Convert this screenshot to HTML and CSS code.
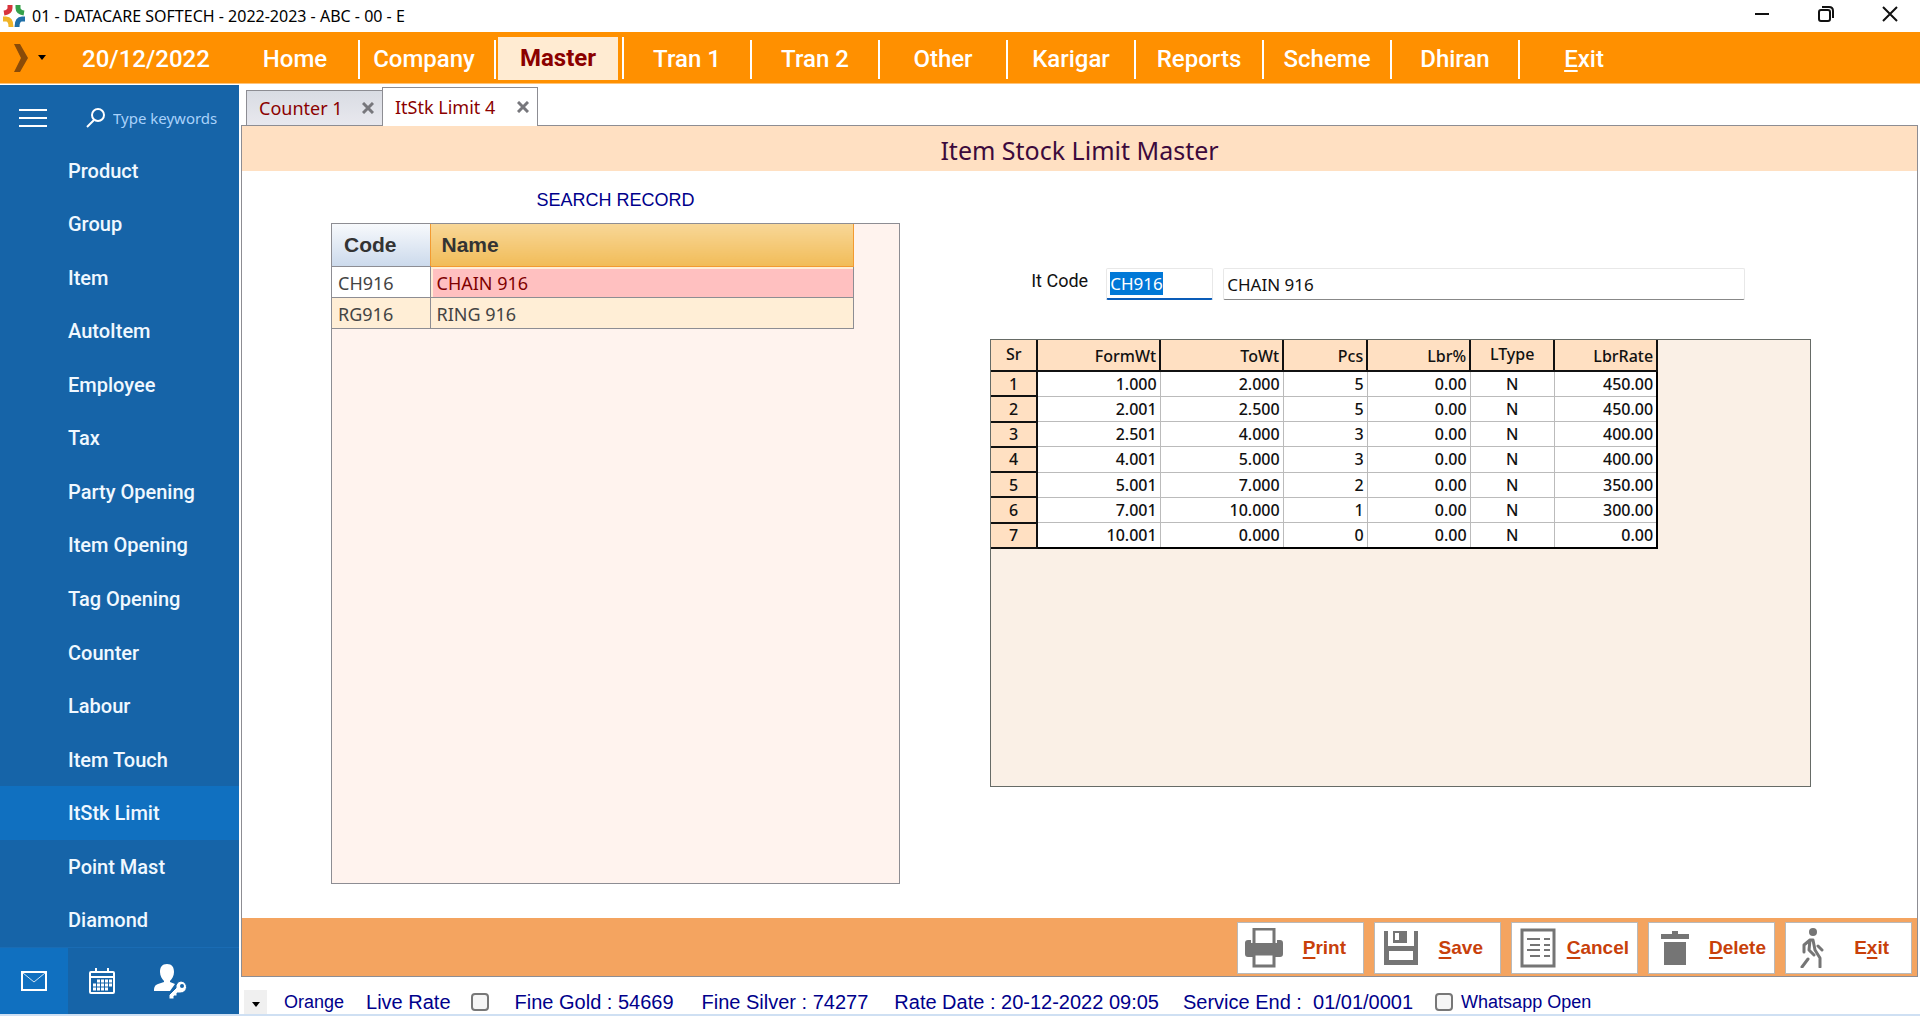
FILE: index.html
```html
<!DOCTYPE html>
<html lang="en">
<head>
    <meta charset="UTF-8">
    <meta name="viewport" content="width=device-width, initial-scale=1.0">
    <title>01 - DATACARE SOFTECH - 2022-2023 - ABC - 00 - E</title>
    <link rel="stylesheet" href="styles.css">
</head>
<body>

    <!-- Window title -->
    <header class="titlebar">
        <svg class="logo" viewBox="0 0 24 24" fill="none" stroke-width="5">
            <path d="M8 1v3q0 4-6 5" stroke="#d8343c"/>
            <path d="M16 1v3q0 4 6 5" stroke="#35a04a"/>
            <path d="M1 15h3q5 0 5 8" stroke="#f0b428"/>
            <path d="M23 15h-3q-5 0-5 8" stroke="#1f6fa8"/>
        </svg>
        <span class="window-title">01 - DATACARE SOFTECH - 2022-2023 - ABC - 00 - E</span>
        <div class="window-buttons">
            <button aria-label="Minimize"><svg viewBox="0 0 16 16"><path d="M1 8h14"/></svg></button>
            <button aria-label="Restore"><svg viewBox="0 0 16 16"><rect x="1" y="4" width="11" height="11" rx="2"/><path d="M4 1h7q4 0 4 4v7"/></svg></button>
            <button aria-label="Close"><svg viewBox="0 0 16 16"><path d="M1 1l14 14M15 1L1 15"/></svg></button>
        </div>
    </header>

    <!-- Main menu -->
    <nav class="menubar">
        <button class="theme-btn" aria-label="Expand">
            <svg width="14" height="28" viewBox="0 0 14 28"><path d="M0 0h6l8 14-8 14H0l7-14z" fill="#8a4b08"/></svg>
            <svg width="8" height="5" viewBox="0 0 8 5"><path d="M0 0h8L4 5z" fill="#000"/></svg>
        </button>
        <span class="menu-date">20/12/2022</span>
        <a class="menu-item" href="#">Home</a>
        <a class="menu-item wide" href="#">Company</a>
        <a class="menu-item active" href="#"><span>Master</span></a>
        <a class="menu-item" href="#">Tran 1</a>
        <a class="menu-item" href="#">Tran 2</a>
        <a class="menu-item" href="#">Other</a>
        <a class="menu-item" href="#">Karigar</a>
        <a class="menu-item" href="#">Reports</a>
        <a class="menu-item" href="#">Scheme</a>
        <a class="menu-item" href="#">Dhiran</a>
        <a class="menu-item" href="#"><span><u>E</u>xit</span></a>
    </nav>

    <div class="main">

        <!-- Sidebar -->
        <aside class="sidebar">
            <div class="side-search">
                <button aria-label="Menu"><svg width="28" height="18" viewBox="0 0 28 18"><path d="M0 1h28M0 9h28M0 17h28" stroke="#fff" stroke-width="2"/></svg></button>
                <label for="keywords"><svg width="20" height="20" viewBox="0 0 20 20" fill="none" stroke="#fff" stroke-width="2"><circle cx="12" cy="7" r="6"/><path d="M8 12l-7 7"/></svg></label>
                <input type="text" id="keywords" placeholder="Type keywords" aria-label="Type keywords">
            </div>
            <div class="side-list">
                <a href="#">Product</a>
                <a href="#">Group</a>
                <a href="#">Item</a>
                <a href="#">AutoItem</a>
                <a href="#">Employee</a>
                <a href="#">Tax</a>
                <a href="#">Party Opening</a>
                <a href="#">Item Opening</a>
                <a href="#">Tag Opening</a>
                <a href="#">Counter</a>
                <a href="#">Labour</a>
                <a href="#">Item Touch</a>
                <a href="#" class="active">ItStk Limit</a>
                <a href="#">Point Mast</a>
                <a href="#">Diamond</a>
            </div>
            <div class="side-bottom">
                <button class="active" aria-label="Mail">
                    <svg width="26" height="20" viewBox="0 0 26 20" fill="none" stroke="#fff"><rect x="1" y="1" width="24" height="18" stroke-width="2"/><path d="M2 2l11 9L24 2" stroke-width="1" opacity=".8"/></svg>
                </button>
                <button aria-label="Calendar">
                    <svg width="26" height="26" viewBox="0 0 26 26" fill="none" stroke="#fff">
                        <rect x="1" y="4" width="24" height="21" rx="1" stroke-width="2"/>
                        <path d="M7 0v5M19 0v5M1 9h24" stroke-width="2"/>
                        <path d="M8 13h15M4 17h19M4 21h15" stroke-width="3" stroke-dasharray="3 1"/>
                    </svg>
                </button>
                <button aria-label="User access">
                    <svg width="33" height="35" viewBox="0 0 33 35" fill="#fff">
                        <path d="M13 0c5 0 7 3 7 8 0 4-2 7-4 9v1l5 2-5 7H0c0-4 1-6 4-7l6-2v-1c-2-2-4-5-4-9 0-5 2-8 7-8z"/>
                        <path d="M27 17a6 6 0 1 1-1 12h-3v3h-3v3h-5v-4l7-7a6 6 0 0 1 5-7z" stroke="#1664a8" stroke-width="1"/>
                        <circle cx="28" cy="22" r="2" fill="#1664a8"/>
                    </svg>
                </button>
            </div>
        </aside>

        <div class="workspace">
            <div class="tabs">
                <div class="tab">Counter 1 <button aria-label="Close Counter 1"><svg viewBox="0 0 12 12"><path d="M1 1l10 10M11 1L1 11"/></svg></button></div>
                <div class="tab active">ItStk Limit 4 <button aria-label="Close ItStk Limit 4"><svg viewBox="0 0 12 12"><path d="M1 1l10 10M11 1L1 11"/></svg></button></div>
            </div>

            <div class="page">
                <h1>Item Stock Limit Master</h1>

                <div class="content">
                    <!-- Search list -->
                    <section class="search">
                        <h2>SEARCH RECORD</h2>
                        <div class="search-box">
                            <table class="search-table">
                                <thead>
                                    <tr><th class="code">Code</th><th class="sorted">Name</th></tr>
                                </thead>
                                <tbody>
                                    <tr><td>CH916</td><td class="selected">CHAIN 916</td></tr>
                                    <tr><td>RG916</td><td>RING 916</td></tr>
                                </tbody>
                            </table>
                        </div>
                    </section>

                    <!-- Stock limits of the selected item -->
                    <section class="details">
                        <div class="item-row">
                            <label for="itcode">It Code</label>
                            <div class="code-field"><input type="text" id="itcode" value="CH916"></div>
                            <input type="text" class="item-name" value="CHAIN 916" aria-label="Item name">
                        </div>
                        <div class="limit-box">
                            <table class="limit-table">
                                <colgroup>
                                    <col class="w-sr"><col class="w-wt"><col class="w-wt"><col class="w-s"><col class="w-m"><col class="w-s"><col class="w-m">
                                </colgroup>
                                <thead>
                                    <tr><th class="mid">Sr</th><th>FormWt</th><th>ToWt</th><th>Pcs</th><th>Lbr%</th><th class="mid">LType</th><th>LbrRate</th></tr>
                                </thead>
                                <tbody>
                                    <tr><th>1</th><td>1.000</td><td>2.000</td><td>5</td><td>0.00</td><td class="mid">N</td><td>450.00</td></tr>
                                    <tr><th>2</th><td>2.001</td><td>2.500</td><td>5</td><td>0.00</td><td class="mid">N</td><td>450.00</td></tr>
                                    <tr><th>3</th><td>2.501</td><td>4.000</td><td>3</td><td>0.00</td><td class="mid">N</td><td>400.00</td></tr>
                                    <tr><th>4</th><td>4.001</td><td>5.000</td><td>3</td><td>0.00</td><td class="mid">N</td><td>400.00</td></tr>
                                    <tr><th>5</th><td>5.001</td><td>7.000</td><td>2</td><td>0.00</td><td class="mid">N</td><td>350.00</td></tr>
                                    <tr><th>6</th><td>7.001</td><td>10.000</td><td>1</td><td>0.00</td><td class="mid">N</td><td>300.00</td></tr>
                                    <tr><th>7</th><td>10.001</td><td>0.000</td><td>0</td><td>0.00</td><td class="mid">N</td><td>0.00</td></tr>
                                </tbody>
                            </table>
                        </div>
                    </section>
                </div>

                <!-- Actions -->
                <div class="actions">
                    <button>
                        <svg viewBox="0 0 40 40">
                            <path d="M4 12h3v3h26v-3h3q3 0 3 3v11q0 3-3 3h-5v-3H9v3H4q-3 0-3-3V15q0-3 3-3z" fill="#757575"/>
                            <path d="M10 15V1h20v14M10 26h20v12H10z" fill="#fff" stroke="#757575" stroke-width="3"/>
                        </svg>
                        <span><u>P</u>rint</span>
                    </button>
                    <button>
                        <svg viewBox="0 0 40 40">
                            <path d="M3 3h4v15h26V3h4v34H3z" fill="#757575"/>
                            <path d="M12 3h14v12H12z" fill="#757575"/>
                            <path d="M14 5h4v7h-4z" fill="#fff"/>
                            <path d="M8 23h24v9H8z" fill="#fff"/>
                        </svg>
                        <span><u>S</u>ave</span>
                    </button>
                    <button>
                        <svg viewBox="0 0 40 40" fill="none" stroke="#757575">
                            <rect x="4" y="2" width="32" height="36" stroke-width="3"/>
                            <path d="M9 11h13M12 17h10M9 22h13M12 28h10M26 11h6M26 17h6M26 22h6M26 28h6" stroke-width="2"/>
                        </svg>
                        <span><u>C</u>ancel</span>
                    </button>
                    <button>
                        <svg viewBox="0 0 40 40" fill="#757575">
                            <path d="M6 11V6h11V3h6v3h11v5z"/>
                            <path d="M9 14h22v23H9z"/>
                        </svg>
                        <span><u>D</u>elete</span>
                    </button>
                    <button>
                        <svg viewBox="0 0 40 40" fill="none" stroke="#757575" stroke-width="3" stroke-linecap="round" stroke-linejoin="round">
                            <circle cx="21" cy="4" r="4" fill="#757575" stroke="none"/>
                            <path d="M12 24v-7l6-5h3l2 10 5 8v9M18 12l-1 10 5 5M16 31l-6 8M26 18l4 4"/>
                        </svg>
                        <span>E<u>x</u>it</span>
                    </button>
                </div>
            </div>

            <!-- Status bar -->
            <footer class="statusbar">
                <button class="theme-drop" aria-label="Choose theme"><svg width="8" height="5" viewBox="0 0 8 5"><path d="M0 0h8L4 5z" fill="#000"/></svg></button>
                <span class="small">Orange</span>
                <label class="live" for="liverate">Live Rate</label>
                <input type="checkbox" id="liverate">
                <span class="gold">Fine Gold : 54669</span>
                <span class="silver">Fine Silver : 74277</span>
                <span>Rate Date : 20-12-2022 09:05</span>
                <span class="service">Service End :&nbsp; 01/01/0001</span>
                <input type="checkbox" id="whatsapp">
                <label class="small wa" for="whatsapp">Whatsapp Open</label>
            </footer>
        </div>
    </div>

    <script>
        // start with the code selected, ready to be typed over
        document.getElementById('itcode').select();
    </script>
</body>
</html>
```
FILE: styles.css
```css
* {
    box-sizing: border-box;
}

body {
    margin: 0;
    height: 100vh;
    display: flex;
    flex-direction: column;
    font-family: "Noto Sans", "Open Sans", sans-serif;
    font-size: 16px;
    color: #111;
    background: #fff;
    border-bottom: 2px solid #cfe0f3;
    overflow: hidden;
}

button, input {
    font-family: inherit;
    color: inherit;
    margin: 0;
}

button {
    border: none;
    background: none;
    padding: 0;
    cursor: pointer;
}

a {
    text-decoration: none;
}

/* title bar */
.titlebar {
    display: flex;
    align-items: center;
    height: 32px;
    flex: none;
    padding-left: 2px;
}

.logo {
    width: 24px;
    height: 24px;
}

.window-title {
    font-size: 16px;
    color: #000;
    margin-left: 6px;
}

.window-buttons {
    margin-left: auto;
    display: flex;
}

.window-buttons button {
    width: 64px;
    height: 28px;
    padding-left: 4px;
}

.window-buttons svg {
    width: 16px;
    height: 16px;
    fill: none;
    stroke: #111;
    stroke-width: 2;
}

/* menu bar */
.menubar {
    display: flex;
    height: 52px;
    flex: none;
    background: #ff9000;
    font-family: Roboto, sans-serif;
    font-size: 24px;
    font-weight: 500;
    color: #fff;
    border-bottom: 1px solid #ffc47a;
}

.theme-btn {
    width: 60px;
    display: flex;
    align-items: center;
    gap: 10px;
    padding-left: 14px;
}

.menu-date {
    width: 172px;
    padding-left: 22px;
    line-height: 54px;
}

.menu-item {
    flex: 0 1 128px;
    display: flex;
    align-items: center;
    justify-content: center;
    margin: 8px 0 4px;
    padding-bottom: 1px;
    color: #fff;
    border-right: 2px solid #fff;
}

.menu-item.wide {
    flex-basis: 136px;
    padding-right: 6px;
}

.menu-item:last-child {
    border-right: none;
}

.menu-item.active {
    color: #8b0000;
    font-weight: 700;
    margin-top: 5px;
    padding: 0 4px 0 2px;
}

.menu-item.active span {
    flex: 1;
    text-align: center;
    background: #ffebd2;
    line-height: 43px;
}

/* sidebar */
.main {
    flex: 1;
    display: flex;
    min-height: 0;
    padding-top: 1px;
}

.sidebar {
    width: 239px;
    flex: none;
    display: flex;
    flex-direction: column;
    background: #1664a8;
    color: #fff;
}

.side-search {
    display: flex;
    align-items: center;
    height: 59px;
    padding: 7px 20px 0 19px;
}

.side-search label {
    margin-left: 39px;
    height: 20px;
}

.side-search button {
    height: 18px;
}

.side-search input {
    width: 108px;
    margin-left: 7px;
    padding: 0;
    border: none;
    background: none;
    font-size: 15px;
}

.side-search input::placeholder {
    color: #a9d2fb;
    opacity: 1;
}

.side-list {
    flex: 1;
    display: flex;
    flex-direction: column;
}

.side-list a {
    flex: 1;
    display: flex;
    align-items: center;
    padding-left: 68px;
    font-family: Roboto, sans-serif;
    font-size: 20px;
    font-weight: 500;
    color: #f0f8ff;
}

.side-list .active, .side-bottom .active {
    background: #1070c0;
}

.side-bottom {
    display: flex;
    height: 67px;
    border-top: 1px solid #1a6cb4;
}

.side-bottom button {
    width: 68px;
}

.side-bottom svg {
    display: block;
    margin: 0 auto;
}

/* tabs */
.workspace {
    flex: 1;
    min-width: 0;
    display: flex;
    flex-direction: column;
    padding: 0 2px;
}

.tabs {
    display: flex;
    align-items: flex-end;
    height: 40px;
    padding-left: 5px;
}

.tab {
    display: flex;
    align-items: center;
    justify-content: space-between;
    width: 136px;
    height: 35px;
    padding: 0 8px 0 12px;
    font-size: 18px;
    color: #8b0000;
    background: linear-gradient(#d9dce3, #e8e8ee);
    border: 1px solid #8d8d93;
    border-right: none;
    border-bottom: none;
    white-space: nowrap;
}

.tab.active {
    width: 156px;
    height: 39px;
    background: #fff;
    border-right: 1px solid #8d8d93;
    padding: 0 8px 0 12px;
    /* covers the page border below it */
    margin-bottom: -1px;
    z-index: 1;
}

.tab svg {
    display: block;
    width: 12px;
    height: 12px;
    stroke: #77777c;
    stroke-width: 3;
}

/* page */
.page {
    flex: 1;
    display: flex;
    flex-direction: column;
    border: 1px solid #8d8d93;
    min-height: 0;
}

h1 {
    margin: 0;
    height: 45px;
    line-height: 49px;
    background: #ffe0c2;
    font-size: 25px;
    font-weight: 400;
    text-align: center;
    color: #3c0a3c;
}

.content {
    flex: 1;
    display: grid;
    grid-template-columns: 570fr 822fr;
    column-gap: 90px;
    padding: 0 106px 0 89px;
    min-height: 0;
}

h2 {
    margin: 0;
    padding-top: 19px;
    height: 52px;
    line-height: 20px;
    font-family: "Liberation Sans", sans-serif;
    font-size: 18px;
    font-weight: 400;
    color: #00008b;
    text-align: center;
}

.search {
    display: flex;
    flex-direction: column;
    padding-bottom: 34px;
}

.search-box {
    flex: 1;
    background: #fff3ee;
    border: 1px solid #8d8d93;
}

table {
    border-collapse: collapse;
    table-layout: fixed;
}

.search-table {
    width: 92%;
    color: #444;
}

.search-table th {
    height: 42px;
    padding: 0 12px;
    text-align: left;
    font-family: "Liberation Sans", sans-serif;
    font-size: 21px;
    color: #333;
    background: linear-gradient(#f7f9fc, #ccdaec);
    border-bottom: 1px solid #8d8d93;
}

.search-table .code {
    width: 98px;
}

.search-table .sorted {
    padding-left: 11px;
    background: linear-gradient(#f8d797, #f1bc58);
    border: 1px solid #f39a30;
    border-top: none;
}

.search-table td {
    height: 31px;
    padding: 2px 6px 0;
    font-size: 18px;
    line-height: 24px;
    background: #fff;
    border: 1px solid #8d8d93;
    border-left: none;
}

.search-table tr:nth-child(2) td {
    background: #ffeed6;
}

.search-table .selected {
    color: #800000;
    background: #ffc0c0;
    box-shadow: inset 2px 2px #ffeed6;
}

/* item and its limits */
.details {
    padding: 97px 0 131px;
    display: flex;
    flex-direction: column;
}

.item-row {
    display: flex;
    gap: 10px;
    height: 32px;
    padding: 0 66px 0 41px;
}

.item-row label {
    width: 65px;
    padding-top: 1px;
    font-family: Roboto, sans-serif;
    font-size: 18px;
    line-height: 24px;
}

.code-field, .item-name {
    border: 1px solid #e8e8e8;
    border-bottom: 1px solid #888;
    padding: 0 3px;
    font-size: 17px;
    border-radius: 2px;
}

.code-field {
    width: 107px;
    border-bottom: 2px solid #0a5cb8;
}

.code-field input {
    width: 100%;
    height: 29px;
    padding: 0;
    border: none;
    outline: none;
    font-size: 17px;
}

.code-field input::selection {
    color: #fff;
    background: #0078d7;
}

.item-name {
    flex: 1;
    min-width: 0;
}

.limit-box {
    flex: 1;
    margin-top: 39px;
    background: #faf0e6;
    border: 1px solid #666b66;
}

.limit-table {
    width: 666px;
    height: 209px;
    border-right: 2px solid #000;
    border-bottom: 2px solid #000;
}

.w-sr {
    width: 46px;
}

.w-wt {
    width: 123px;
}

.w-s {
    width: 84px;
}

.w-m {
    width: 103px;
}

.limit-table th, .limit-table td {
    height: 25px;
    padding: 0 3px;
    line-height: 20px;
    font-weight: 500;
    text-align: right;
    background: #fff;
    border: 1px solid #bbb;
}

.limit-table th {
    background: #ffe0c2;
    border: 2px solid #111;
    border-top: none;
    border-left: 2px solid #111;
}

.limit-table thead th {
    height: 31px;
    padding-top: 2px;
    font-weight: 500;
}

.limit-table tr th:first-child {
    text-align: center;
    border-left: none;
}

.limit-table tr .mid {
    text-align: center;
}

.limit-table thead .mid {
    padding: 0 3px 3px;
}

/* action buttons */
.actions {
    display: flex;
    justify-content: flex-end;
    gap: 10px;
    height: 58px;
    padding: 4px 5px 2px;
    background: #f4a460;
}

.actions button {
    display: flex;
    align-items: center;
    justify-content: space-between;
    width: 127px;
    padding: 0 17px 0 6px;
    background: #fff;
    border: 1px solid #b9b9b9;
    font-family: "Liberation Sans", sans-serif;
    font-size: 19px;
    font-weight: 700;
    color: #c8400a;
}

.actions button:nth-child(3), .actions button:nth-child(4) {
    padding-right: 8px;
}

.actions button:last-child {
    padding-right: 22px;
}

.actions svg {
    width: 40px;
    height: 40px;
}

u {
    text-underline-offset: 3px;
    text-decoration-thickness: 2px;
}

/* status bar */
.statusbar {
    display: flex;
    align-items: center;
    height: 37px;
    padding: 13px 0 0 3px;
    font-family: "Liberation Sans", sans-serif;
    font-size: 20px;
    color: #00008b;
    white-space: nowrap;
}

.theme-drop {
    width: 23px;
    height: 24px;
    margin-right: 17px;
    background: #f0f0f0;
}

.statusbar .small {
    font-size: 18px;
}

.statusbar .live {
    margin: 0 20px 0 22px;
}

.gold {
    margin: 0 28px 0 26px;
}

.silver {
    margin-right: 26px;
}

.service {
    margin: 0 22px 0 24px;
}

.statusbar input {
    appearance: none;
    width: 18px;
    height: 18px;
    background: #f6f6f6;
    border: 2px solid #777;
    border-radius: 4px;
}

.statusbar .wa {
    margin-left: 8px;
}
```
